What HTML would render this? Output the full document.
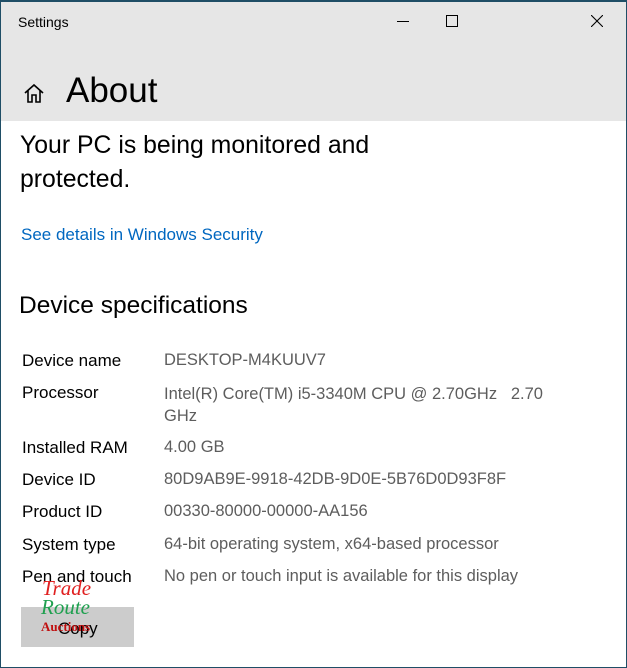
<!DOCTYPE html>
<html><head><style>
body{margin:0;width:627px;height:667px;overflow:hidden;background:#fff;font-family:"Liberation Sans",sans-serif;position:relative}
.win{position:absolute;left:0;top:0;width:625px;height:665px;border:1px solid #1f4e66;border-top:2px solid #1f4e66;background:#fff}
.hdr{position:absolute;left:0;top:0;width:625px;height:119px;background:#e6e6e6}
.t{position:absolute;white-space:nowrap}
.l{position:absolute;left:21px;font-size:17px;color:#000}
.v{position:absolute;left:163px;font-size:16.5px;color:#5d5d5d}
</style></head><body>
<div class="win">
<div class="hdr">
<div class="t" style="left:17px;top:12px;font-size:14px">Settings</div>
<div style="position:absolute;left:396px;top:19px;width:12px;border-top:1px solid #000"></div>
<div style="position:absolute;left:445px;top:13px;width:10px;height:10px;border:1px solid #000"></div>
<svg style="position:absolute;left:590px;top:13px" width="12" height="12"><path d="M0 0L12 12M12 0L0 12" stroke="#000" stroke-width="1.1"/></svg>
<svg style="position:absolute;left:22px;top:80px" width="22" height="22" viewBox="0 0 22 22"><path d="M2 11L11 3L20 11M5 8.5V20H9V13H13V20H17V8.5" fill="none" stroke="#000" stroke-width="1.6"/></svg>
<div class="t" style="left:65px;top:69px;font-size:35px">About</div>
</div>
<div class="t" style="left:19px;top:127px;font-size:24.8px;line-height:34px">Your PC is being monitored and<br>protected.</div>
<div class="t" style="left:20px;top:223px;font-size:17px;color:#0067c0">See details in Windows Security</div>
<div class="t" style="left:18px;top:290px;font-size:24.5px">Device specifications</div>
<div class="l" style="top:349px">Device name</div><div class="v" style="top:349px">DESKTOP-M4KUUV7</div>
<div class="l" style="top:381px">Processor</div><div class="v" style="top:381px;line-height:22px">Intel(R) Core(TM) i5-3340M CPU @ 2.70GHz&nbsp;&nbsp; 2.70<br>GHz</div>
<div class="l" style="top:436px">Installed RAM</div><div class="v" style="top:436px">4.00 GB</div>
<div class="l" style="top:468px">Device ID</div><div class="v" style="top:468px">80D9AB9E-9918-42DB-9D0E-5B76D0D93F8F</div>
<div class="l" style="top:500px">Product ID</div><div class="v" style="top:500px">00330-80000-00000-AA156</div>
<div class="l" style="top:533px">System type</div><div class="v" style="top:533px">64-bit operating system, x64-based processor</div>
<div class="l" style="top:565px">Pen and touch</div><div class="v" style="top:565px">No pen or touch input is available for this display</div>
<div style="position:absolute;left:20px;top:605px;width:113px;height:40px;background:#ccc"></div>
<div class="t" style="left:57px;top:617px;font-size:17px">Copy</div>
<div class="t" style="left:41px;top:574px;font-size:21px;font-style:italic;font-family:'Liberation Serif',serif;color:#e02020">Trade</div>
<div class="t" style="left:40px;top:593px;font-size:21px;font-style:italic;font-family:'Liberation Serif',serif;color:#20a050">Route</div>
<div class="t" style="left:40px;top:617px;font-size:13px;font-weight:bold;font-family:'Liberation Serif',serif;color:#c01010">Auctions</div>
</div>
</body></html>
